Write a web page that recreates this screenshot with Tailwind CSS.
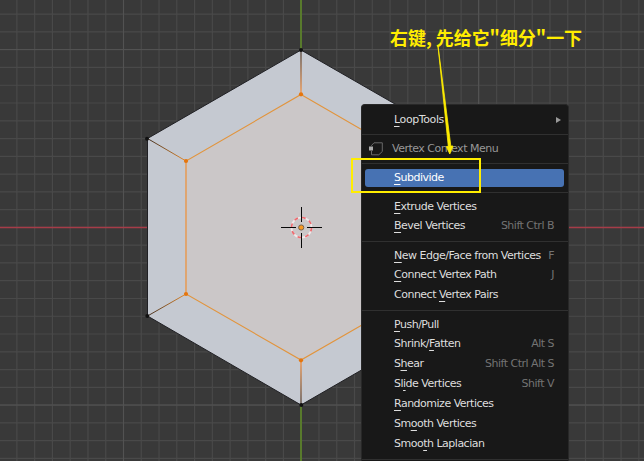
<!DOCTYPE html>
<html lang="zh">
<head>
<meta charset="utf-8">
<title>Vertex Context Menu</title>
<script src="https://cdn.jsdelivr.net/npm/@tailwindcss/browser@4"></script>
</head>
<body class="relative h-[461px] w-[644px] overflow-hidden bg-[#393939] font-['DejaVu_Sans',sans-serif]">
<!-- 3D viewport -->
<svg class="absolute inset-0" width="644" height="461" viewBox="0 0 644 461">
  <defs>
    <linearGradient id="gt" gradientUnits="userSpaceOnUse" x1="0" y1="50" x2="0" y2="94"><stop stop-color="#77716f"/><stop offset="1" stop-color="#e8a673"/></linearGradient>
    <linearGradient id="gb" gradientUnits="userSpaceOnUse" x1="0" y1="405" x2="0" y2="360"><stop stop-color="#77716f"/><stop offset="1" stop-color="#e8a673"/></linearGradient>
    <linearGradient id="gl" gradientUnits="userSpaceOnUse" x1="147" y1="0" x2="186" y2="0"><stop stop-color="#3b2b20"/><stop offset="1" stop-color="#e58b2d"/></linearGradient>
  </defs>
  <path id="grid" d="" stroke="#494949" stroke-width="1.2"/>
  <path d="M0 49.500H644M0 405H644M123.500 0V461M478.500 0V461" stroke="#525252"/>
  <path d="M0 227.500H644" stroke="#a63c48" stroke-width="1.3"/>
  <rect x="300" y="0" width="2" height="461" fill="#587a2c"/>
  <path d="M301 50L455 138.500V316L301 405L147.500 316V138.500Z" fill="#c5c9d1" stroke="#202024"/>
  <path d="M301 94.500L416 161V294L301 360L186 294V161Z" fill="#cbc7c8" stroke="#e2943c" stroke-width="1.100"/>
  <path d="M186 161V294" stroke="#e0a571" stroke-width="1.800"/>
  <path d="M147.500 138.500L186 161M147.500 316L186 294" stroke="url(#gl)"/>
  <rect x="300" y="50" width="2" height="44" fill="url(#gt)"/>
  <rect x="300" y="360" width="2" height="45" fill="url(#gb)"/>
  <g fill="#111"><circle cx="301" cy="50" r="2"/><circle cx="147" cy="138.700" r="2"/><circle cx="147.300" cy="316" r="2"/><circle cx="301.300" cy="405" r="2"/></g>
  <g fill="#e5750d"><circle cx="301" cy="94.300" r="2.100"/><circle cx="186" cy="161" r="2.100"/><circle cx="186" cy="294" r="2.100"/><circle cx="301" cy="360.300" r="2.100"/></g>
  <!-- 3D cursor -->
  <circle cx="301.500" cy="227.500" r="10" fill="none" stroke="#f1e9ea" stroke-width="1.700"/>
  <circle cx="301.500" cy="227.500" r="10" fill="none" stroke="#ed6b70" stroke-width="1.700" stroke-dasharray="3.927 3.927"/>
  <path d="M281 227.500H296M307 227.500H322M301.500 207V222M301.500 233V248" stroke="#080808"/>
  <circle cx="301.200" cy="227.500" r="2.600" fill="#f89a22" stroke="#76624f" stroke-width="1"/>
</svg>

<!-- Context menu -->
<main class="absolute left-[361px] top-[104px] h-[357px] w-[208px] overflow-hidden rounded-t-[4px] border border-b-0 border-[#282828] bg-[#181818] text-[11px] leading-[20px] tracking-[-0.5px] whitespace-nowrap text-[#dedede] [&_u]:decoration-1 [&_u]:underline-offset-[3px] [&_u]:[text-decoration-skip-ink:none] [&_kbd]:font-['DejaVu_Sans',sans-serif] [&_kbd]:text-[11px] [&_kbd]:text-[#737373]">
  <section class="flex h-[30px] items-center justify-between border-b border-[#303030] pr-[7px] pl-[32px] tracking-[-0.4px]"><span><u>L</u>oopTools</span>
    <svg width="5" height="6" viewBox="0 0 5 6"><path d="M0 0L5 3L0 6Z" fill="#999"/></svg></section>
  <section class="flex h-[29px] items-center gap-[9px] border-b border-[#303030] pl-[7px] text-[#979797]"><svg width="14" height="14" viewBox="0 0 14 14"><path d="M2.500 4V3.500L5 .8H13.300V9.500L9.800 12.800H2.500V9" fill="none" stroke="#686868"/><rect x="0" y="4.500" width="4" height="4" fill="#aaa"/></svg><span>Vertex Context Menu</span></section>
  <section class="flex h-[29px] items-center border-b border-[#303030] pr-[4px] pl-[3px]"><div class="h-[18px] w-full rounded-[3px] bg-[#4772b3] pl-[29px] leading-[18px] text-white"><u>S</u>ubdivide</div></section>
  <section class="h-[49px] border-b border-[#303030] pt-[4px] pr-[14px] pl-[32px]">
    <div class="flex h-[19px] justify-between"><span><u>E</u>xtrude Vertices</span></div>
    <div class="flex h-[20px] justify-between"><span><u>B</u>evel Vertices</span><kbd>Shift Ctrl B</kbd></div>
  </section>
  <section class="h-[69px] border-b border-[#303030] pt-[4px] pr-[14px] pl-[32px]">
    <div class="flex h-[19px] justify-between"><span><u>N</u>ew Edge/Face from Vertices</span><kbd>F</kbd></div>
    <div class="flex h-[20px] justify-between"><span><u>C</u>onnect Vertex Path</span><kbd>J</kbd></div>
    <div class="flex h-[20px] justify-between"><span>Connect <u>V</u>ertex Pairs</span></div>
  </section>
  <section class="h-[149px] border-b border-[#303030] pt-[4px] pr-[14px] pl-[32px]">
    <div class="flex h-[19px] justify-between"><span><u>P</u>ush/Pull</span></div>
    <div class="flex h-[20px] justify-between"><span>Shrink/<u>F</u>atten</span><kbd>Alt S</kbd></div>
    <div class="flex h-[20px] justify-between"><span>S<u>h</u>ear</span><kbd>Shift Ctrl Alt S</kbd></div>
    <div class="flex h-[20px] justify-between"><span>Sl<u>i</u>de Vertices</span><kbd>Shift V</kbd></div>
    <div class="flex h-[20px] justify-between"><span><u>R</u>andomize Vertices</span></div>
    <div class="flex h-[20px] justify-between"><span>Sm<u>o</u>oth Vertices</span></div>
    <div class="flex h-[20px] justify-between"><span>Smoo<u>t</u>h Laplacian</span></div>
  </section>
</main>

<!-- Annotation -->
<svg class="absolute inset-0" width="644" height="461" viewBox="0 0 644 461">
  <rect x="352" y="159" width="128" height="33" fill="none" stroke="#ffed00" stroke-width="2"/>
  <path d="M438 46L448.300 146.500H446.300L449.800 154L453 146H450.800L444.500 96Z" fill="#ffed00" stroke="#ffed00" stroke-width=".8"/>
</svg>
<p class="absolute left-[390px] top-[24px] text-[18px] leading-[26px] font-bold tracking-[-0.05px] whitespace-nowrap text-[#ffed00] font-['Noto_Sans_CJK_SC',sans-serif]">右键, 先给它"细分"一下</p>
<script>
  // Minor grid lines, spaced evenly around the world origin
  const step = 17.77;
  let d = '';
  for (let i = -20; i <= 20; i++) {
    d += `M0 ${(227.4 + i * step).toFixed(2)}H644M${(301.2 + i * step).toFixed(2)} 0V461`;
  }
  document.getElementById('grid').setAttribute('d', d);
</script>
</body>
</html>
